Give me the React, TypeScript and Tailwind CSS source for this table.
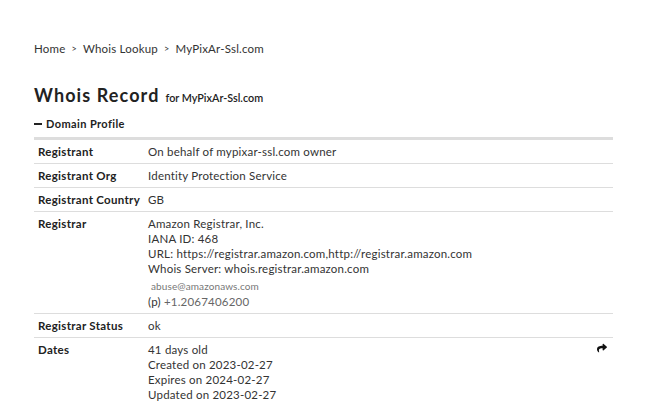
import React from "react";
import { FaShare } from "react-icons/fa";

type Row = {
  label: string;
  lines: React.ReactNode;
  share?: boolean;
};

const rows: Row[] = [
  { label: "Registrant", lines: <div>On behalf of mypixar-ssl.com owner</div> },
  { label: "Registrant Org", lines: <div>Identity Protection Service</div> },
  { label: "Registrant Country", lines: <div>GB</div> },
  {
    label: "Registrar",
    lines: (
      <>
        <div>Amazon Registrar, Inc.</div>
        <div>IANA ID: 468</div>
        <div>URL: https://registrar.amazon.com,http://registrar.amazon.com</div>
        <div>Whois Server: whois.registrar.amazon.com</div>
        <div className="mt-[3px] pl-[3px] text-[10px] tracking-[0.1px] text-[#777]">abuse@amazonaws.com</div>
        <div>
          (p) <span className="text-[#666]">+1.2067406200</span>
        </div>
      </>
    ),
  },
  { label: "Registrar Status", lines: <div>ok</div> },
  {
    label: "Dates",
    share: true,
    lines: (
      <>
        <div>41 days old</div>
        <div>Created on 2023-02-27</div>
        <div>Expires on 2024-02-27</div>
        <div>Updated on 2023-02-27</div>
      </>
    ),
  },
];

export default function App() {
  return (
    <div
      className="min-h-screen bg-white px-[34px] pt-[41px] text-[11.5px] leading-[15px] tracking-[0.2px] text-[#333]"
      style={{ fontFamily: "Lato, 'Noto Sans', sans-serif" }}
    >
      {/* Breadcrumb */}
      <div className="flex items-center gap-[6px] text-[#333]">
        <span>Home</span>
        <span className="text-[9px]">&gt;</span>
        <span>Whois Lookup</span>
        <span className="text-[9px]">&gt;</span>
        <span>MyPixAr-Ssl.com</span>
      </div>

      {/* Title */}
      <h1 className="mt-[32px] flex items-baseline gap-[6px] text-[#222]">
        <span className="text-[18px] font-bold tracking-[1.1px]">Whois Record</span>
        <span className="text-[10.8px] font-semibold tracking-[0px]">for MyPixAr-Ssl.com</span>
      </h1>

      {/* Section */}
      <div className="mt-[11px] flex items-center gap-[4px] text-[11px] font-bold tracking-[0.4px] text-[#222]">
        <span className="inline-block h-[2px] w-[8px] bg-[#222]"></span>
        <span>Domain Profile</span>
      </div>

      <div className="mt-[6px] w-[579px] border-t-[3px] border-[#ddd]">
        {rows.map((row, i) => (
          <div
            key={row.label}
            className={`relative flex pt-[4px] pb-[4px] ${i < rows.length - 1 ? "border-b border-[#ddd]" : ""}`}
          >
            <div className="w-[114px] shrink-0 pl-[4px] font-bold tracking-[0.3px] text-[#222]">{row.label}</div>
            <div className="flex-1">{row.lines}</div>
            {row.share && (
              <FaShare className="absolute right-[6px] top-[5px] h-[10px] w-[10px] text-[#111]" />
            )}
          </div>
        ))}
      </div>
    </div>
  );
}
